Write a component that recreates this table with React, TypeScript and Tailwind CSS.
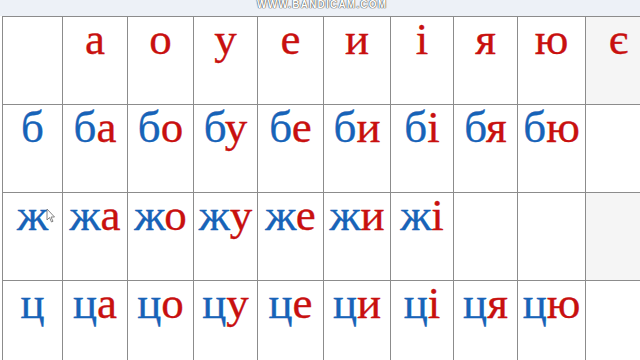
import React from 'react';

const colWidths = 'grid-cols-[60px_65px_66px_64px_66px_67px_63px_64px_68px_66px]';

const vowels = ['а', 'о', 'у', 'е', 'и', 'і', 'я', 'ю', 'є'];

// consonant rows: how many vowels get a syllable
const rows: { cons: string; upTo: number }[] = [
    { cons: 'б', upTo: 8 },
    { cons: 'ж', upTo: 6 },
    { cons: 'ц', upTo: 8 },
];

const Syllable = ({ cons, vowel }: { cons?: string; vowel?: string }) => (
    <span className="leading-none [-webkit-text-stroke:0.35px_currentColor]">
        {cons && <span className="text-[#1763b8]">{cons}</span>}
        {vowel && <span className="text-[#c8100f]">{vowel}</span>}
    </span>
);

const Cursor = () => (
    <svg width="10" height="15" viewBox="0 0 10 15" className="absolute left-[46px] top-[208px]">
        <path d="M1 1 L1 12 L3.5 9.5 L5.5 14 L7 13.3 L5 9 L8.5 9 Z" fill="#fff" stroke="#777" strokeWidth="0.9" strokeLinejoin="round" />
    </svg>
);

const App = () => {
    return (
        <div className="relative w-[640px] h-[360px] overflow-hidden bg-white" style={{ fontFamily: '"Liberation Serif", "Times New Roman", serif' }}>
            <div className="h-[16px] bg-[#edf1f7]" />
            <span
                className="absolute left-[257px] top-0 text-[10px] leading-none font-bold tracking-[1.2px] text-white [text-shadow:0_0_1px_#555,0_0_1px_#555,0_0_1px_#555]"
                style={{ fontFamily: '"Liberation Sans", Arial, sans-serif' }}
            >
                WWW.BANDICAM.COM
            </span>

            <div className={`ml-[2px] grid ${colWidths} auto-rows-[88px] text-[45px]`}>
                {/* header row */}
                <div className="border-l border-t border-[#8c8c8c]" />
                {vowels.map((v, i) => (
                    <div
                        key={v}
                        className={`border-l border-t border-[#8c8c8c] flex justify-center ${i === 8 ? 'bg-[#f5f5f5]' : ''}`}
                    >
                        <Syllable vowel={v} />
                    </div>
                ))}

                {rows.map((row, r) => (
                    <React.Fragment key={row.cons}>
                        <div className="border-l border-t border-[#8c8c8c] flex justify-center">
                            <Syllable cons={row.cons} />
                        </div>
                        {vowels.map((v, i) => (
                            <div
                                key={v}
                                className={`border-l border-t border-[#8c8c8c] flex justify-center ${i === 8 && r === 1 ? 'bg-[#f5f5f5]' : ''}`}
                            >
                                {i < row.upTo && <Syllable cons={row.cons} vowel={v} />}
                            </div>
                        ))}
                    </React.Fragment>
                ))}
            </div>

            <Cursor />
        </div>
    );
};

export default App;
